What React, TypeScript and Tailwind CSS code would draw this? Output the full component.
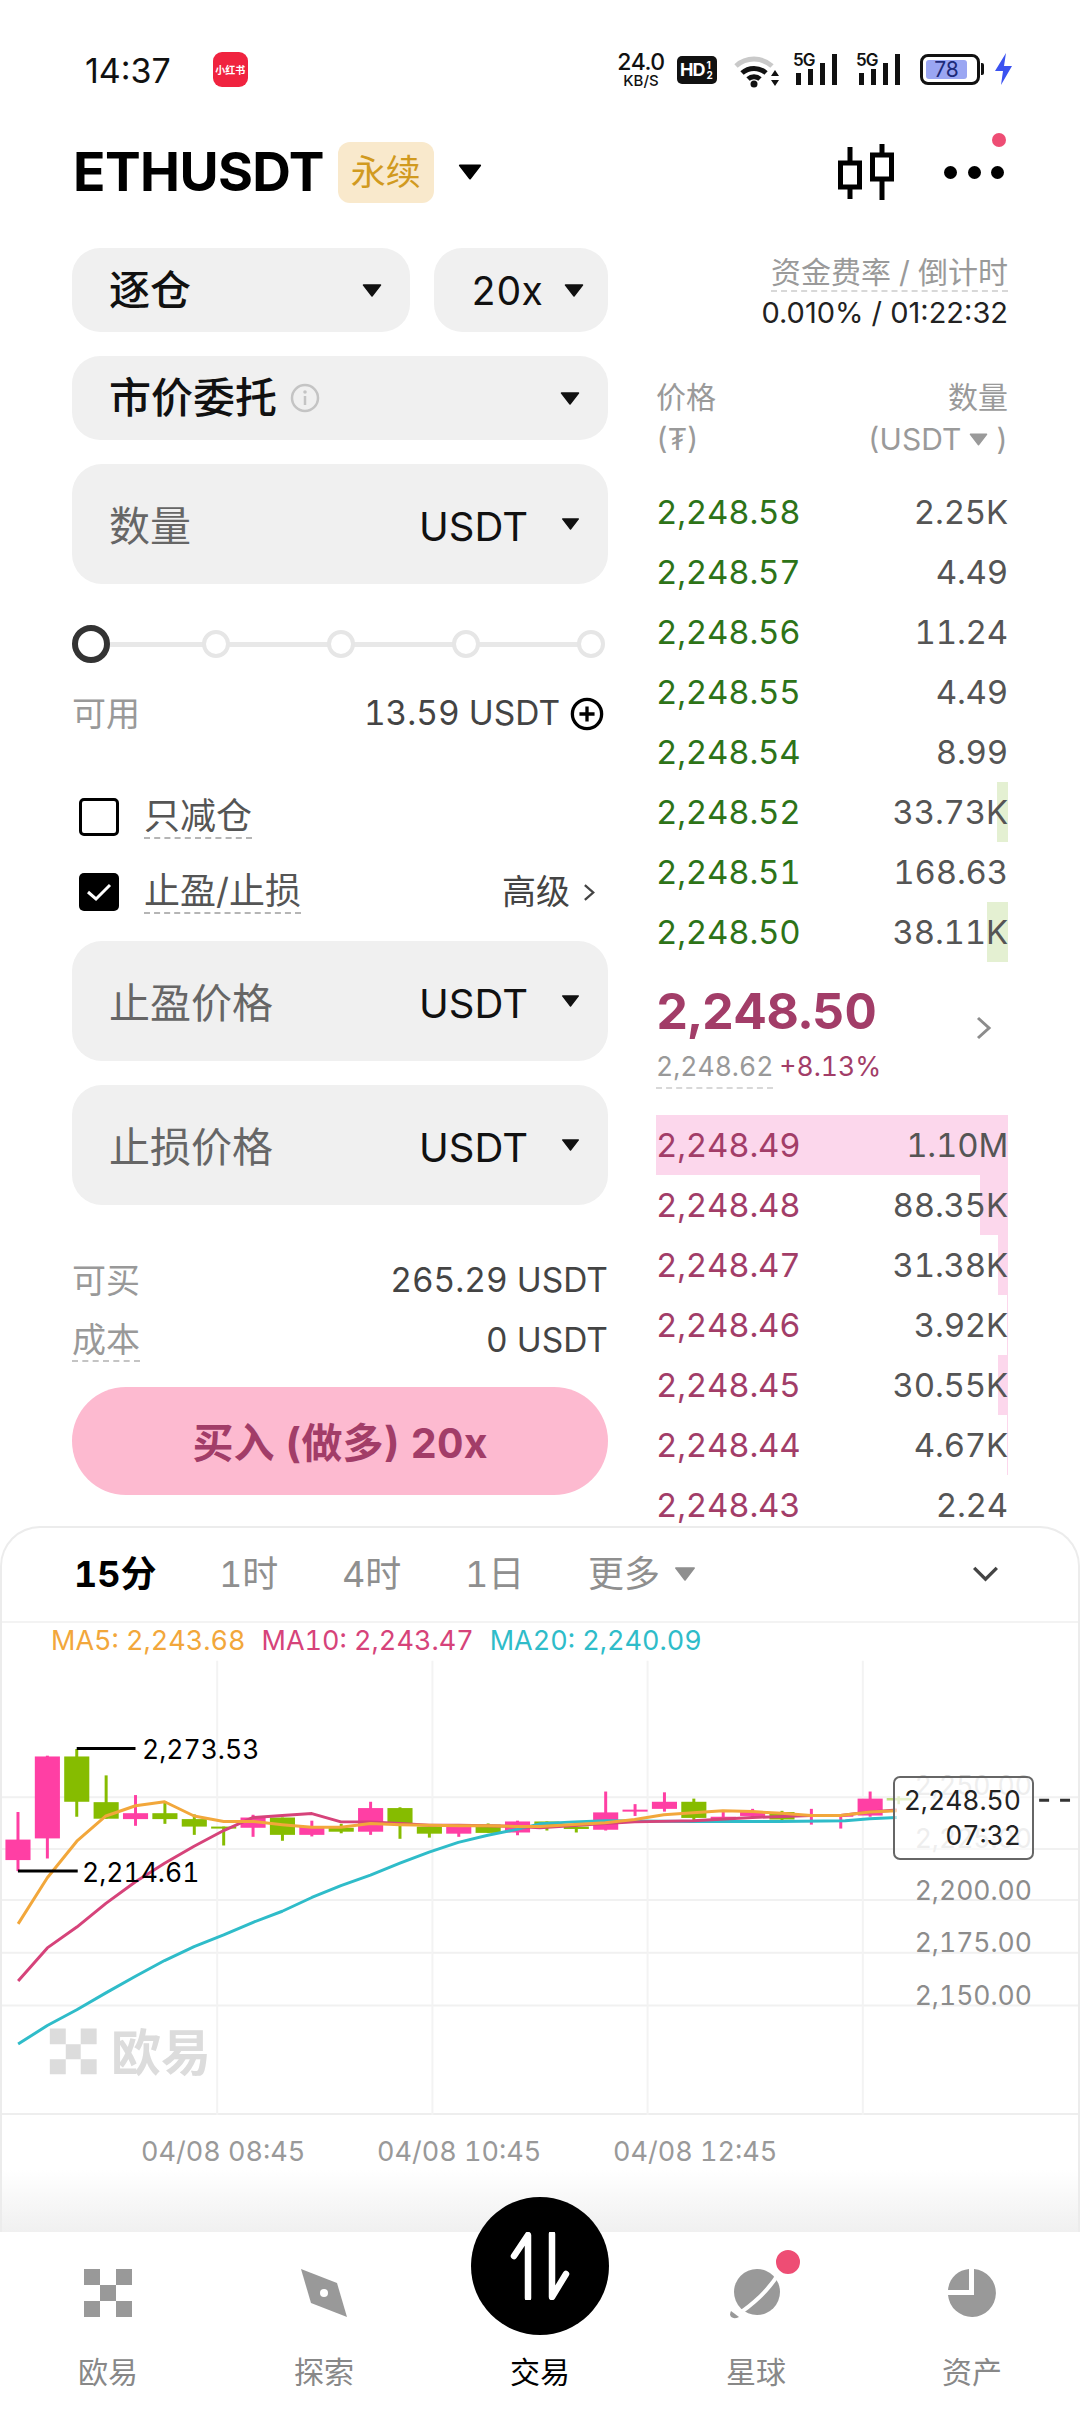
import type { ReactNode } from 'react';

const PINK = '#ff3fa4';
const GREEN = '#86bc00';

const bids = [
  ['2,248.58', '2.25K', 0],
  ['2,248.57', '4.49', 0],
  ['2,248.56', '11.24', 0],
  ['2,248.55', '4.49', 0],
  ['2,248.54', '8.99', 0],
  ['2,248.52', '33.73K', 11],
  ['2,248.51', '168.63', 0],
  ['2,248.50', '38.11K', 21],
] as const;

const asks = [
  ['2,248.49', '1.10M', 352],
  ['2,248.48', '88.35K', 28],
  ['2,248.47', '31.38K', 10],
  ['2,248.46', '3.92K', 1],
  ['2,248.45', '30.55K', 10],
  ['2,248.44', '4.67K', 1],
  ['2,248.43', '2.24', 0],
] as const;

const yLabels = [
  ['2,250.00', 147, '#d4d4d4'],
  ['2,225.00', 200, '#d4d4d4'],
  ['2,200.00', 252, '#8c8c8c'],
  ['2,175.00', 304, '#8c8c8c'],
  ['2,150.00', 357, '#8c8c8c'],
] as const;

// candles: up?, body top, body bottom, wick top, wick bottom (measured on the 2.904 / 2.529 crops)
const candles: [boolean, number, number, number, number][] = [
  [true, 808, 860, 738, 888],
  [true, 597, 805, 595, 856],
  [false, 597, 712, 578, 750],
  [false, 713, 755, 645, 755],
  [true, 741, 756, 695, 773],
  [false, 741, 756, 710, 768],
  [false, 756, 775, 744, 796],
  [false, 775, 777, 775, 823],
  [true, 752, 778, 745, 801],
  [false, 752, 796, 752, 811],
  [true, 775, 796, 760, 800],
  [false, 778, 788, 768, 792],
  [true, 728, 788, 712, 796],
  [false, 728, 770, 726, 806],
  [false, 775, 793, 775, 803],
  [true, 772, 793, 770, 801],
  [false, 770, 791, 767, 791],
  [true, 762, 790, 760, 797],
  [false, 762, 775, 762, 785],
  [false, 775, 781, 775, 790],
  [true, 739, 783, 686, 785],
  [true, 732, 736, 718, 748],
  [true, 712, 730, 688, 737],
  [false, 712, 753, 704, 760],
  [true, 750, 757, 738, 757],
  [true, 738, 748, 730, 750],
  [false, 738, 757, 735, 760],
  [true, 745, 750, 730, 770],
  [true, 745, 750, 745, 780],
  [true, 704, 747, 686, 750],
];

const ma5 = [[47,1022],[132,905],[218,812],[303,748],[389,722],[474,712],[560,748],[646,762],[732,762],[817,770],[903,777],[988,777],[1074,767],[1160,770],[1245,772],[1330,773],[1416,773],[1501,775],[1568,775],[1758,765],[1844,757],[1929,745],[2015,740],[2101,735],[2187,737],[2273,741],[2358,747],[2444,747],[2529,738],[2608,735]];
const ma10 = [[47,1167],[132,1083],[218,1030],[303,970],[389,915],[474,868],[560,825],[646,785],[732,752],[817,747],[903,742],[988,763],[1074,763],[1160,767],[1245,772],[1330,772],[1416,773],[1501,775],[1568,778],[1758,767],[1844,763],[2015,760],[2187,752],[2358,747],[2444,747],[2529,738],[2608,733]];
const ma20 = [[47,1327],[132,1280],[218,1240],[303,1197],[389,1155],[474,1115],[560,1080],[646,1050],[732,1018],[817,990],[903,955],[988,925],[1074,898],[1160,868],[1245,840],[1330,815],[1416,797],[1501,782],[1568,768],[1668,763],[1758,760],[2015,762],[2268,762],[2458,760],[2529,755],[2608,752]];

const X = (u: number) => u / 2.904;
const Y = (u: number) => u * 0.3954 - 100;
const toPoints = (pts: number[][]) => pts.map(([x, y]) => `${X(x).toFixed(1)},${Y(y).toFixed(1)}`).join(' ');

function Caret({ className = 'w-[20px] h-[13px]', fill = '#111' }: { className?: string; fill?: string }) {
  return (
    <svg viewBox="0 0 20 13" className={className}>
      <path d="M1.5 1h17L10 12z" fill={fill} stroke={fill} strokeWidth="1.5" strokeLinejoin="round" />
    </svg>
  );
}

function Signal() {
  return (
    <div className="relative w-[47px] h-[34px]">
      <span className="absolute left-0 top-[0px] text-[17px] font-semibold leading-none tracking-[-1px] text-[#111]">5G</span>
      <svg viewBox="0 0 47 34" className="absolute inset-0 w-full h-full">
        <rect x="3" y="21" width="5" height="12" fill="#111" />
        <rect x="15" y="17" width="5" height="16" fill="#111" />
        <rect x="27" y="11" width="5" height="22" fill="#111" />
        <rect x="39" y="2" width="5" height="31" fill="#111" />
      </svg>
    </div>
  );
}

function StatusBar() {
  return (
    <div className="h-[130px] pl-[85px] pr-[67px] pt-[52px] flex items-start normal-nums">
      <span className="text-[34px] leading-[38px] text-[#111]">14:37</span>
      <div className="ml-[42px] w-[35px] h-[35px] rounded-[9px] bg-[#f0233f] flex items-center justify-center">
        <span className="text-[10px] font-bold text-white whitespace-nowrap leading-none">小红书</span>
      </div>
      <div className="ml-auto flex items-start">
        <div className="w-[52px] flex flex-col items-center text-[#111]">
          <span className="text-[23px] font-medium leading-[21px] tracking-[-0.5px]">24.0</span>
          <span className="text-[15px] font-medium leading-[15px]">KB/S</span>
        </div>
        <div className="ml-[10px] mt-[4px] w-[40px] h-[28px] rounded-[5px] bg-[#111] flex items-center pl-[3px] overflow-hidden">
          <span className="text-[18px] font-bold text-white leading-none tracking-[-1px]">HD</span>
          <span className="text-[10px] font-bold text-white leading-[10px] ml-[2px] w-[6px]">1 2</span>
        </div>
        <svg viewBox="0 0 46 36" className="ml-[17px] w-[46px] h-[36px]">
          <path d="M2 14 A27 27 0 0 1 38 14" fill="none" stroke="#c9c9c9" strokeWidth="5" />
          <path d="M8 21 A18 18 0 0 1 32 21" fill="none" stroke="#111" strokeWidth="5" />
          <path d="M14 27 A9 9 0 0 1 26 27" fill="none" stroke="#111" strokeWidth="5" />
          <circle cx="20" cy="32" r="3.5" fill="#111" />
          <path d="M37 24h8l-4-6zM37 28h8l-4 6z" fill="#111" />
        </svg>
        <div className="ml-[13px]">
          <Signal />
        </div>
        <div className="ml-[16px]">
          <Signal />
        </div>
        <div className="ml-[17px] mt-[2px] w-[60px] h-[31px] rounded-[8px] border-[3px] border-[#111] p-[3px] relative">
          <div className="w-[41px] h-full rounded-[3px] bg-[#9aa6f2] flex items-center justify-center">
            <span className="text-[21px] leading-none text-[#1d2a7a]">78</span>
          </div>
          <div className="absolute right-[-7px] top-[6px] w-[3px] h-[12px] bg-[#111] rounded-r-[2px]" />
        </div>
        <svg viewBox="0 0 20 32" className="ml-[13px] mt-[1px] w-[20px] h-[32px]">
          <path d="M13 0 2 18h8l-2 14L19 13h-8z" fill="#3b52f0" />
        </svg>
      </div>
    </div>
  );
}

function Header() {
  return (
    <div className="h-[110px] pb-[26px] pl-[73px] pr-[76px] flex items-center">
      <span className="text-[53.5px] font-bold leading-none tracking-[-0.6px] text-black">ETHUSDT</span>
      <div className="ml-[14px] w-[96px] h-[61px] rounded-[12px] bg-[#f9e9cc] flex items-center justify-center">
        <span className="text-[35px] leading-none text-[#d19a1f]">永续</span>
      </div>
      <Caret className="ml-[24px] w-[24px] h-[16px]" fill="#000" />
      <svg viewBox="0 0 56 58" className="ml-auto w-[56px] h-[58px]">
        <path d="M12 4v52M44 1v56" stroke="#000" strokeWidth="5" />
        <rect x="2.5" y="20" width="19" height="24" fill="#fff" stroke="#000" strokeWidth="5" />
        <rect x="34.5" y="12" width="19" height="24" fill="#fff" stroke="#000" strokeWidth="5" />
      </svg>
      <div className="relative ml-[50px] w-[60px] flex justify-between">
        <span className="w-[13px] h-[13px] rounded-full bg-black" />
        <span className="w-[13px] h-[13px] rounded-full bg-black" />
        <span className="w-[13px] h-[13px] rounded-full bg-black" />
        <span className="absolute right-[-2px] top-[-33px] w-[14px] h-[14px] rounded-full bg-[#ee4d74]" />
      </div>
    </div>
  );
}

function Select({ children, className }: { children: ReactNode; className: string }) {
  return (
    <div className={`h-[84px] rounded-[28px] bg-[#f0f0f0] flex items-center ${className}`}>
      {children}
    </div>
  );
}

function InputBox({ label, className = '' }: { label: string; className?: string }) {
  return (
    <div className={`h-[120px] rounded-[30px] bg-[#f0f0f0] pl-[37px] pr-[28px] flex items-center ${className}`}>
      <span className="pt-[5px] text-[41px] leading-none text-[#666]">{label}</span>
      <span className="ml-auto pt-[5px] text-[40px] leading-none text-[#111]">USDT</span>
      <Caret className="ml-[33px] w-[19px] h-[12px]" />
    </div>
  );
}

function OrderForm() {
  return (
    <div className="w-[536px] shrink-0 flex flex-col">
      <div className="flex gap-[24px]">
        <Select className="w-[338px] pl-[37px] pr-[28px] justify-between">
          <span className="text-[41px] font-medium leading-none text-[#111]">逐仓</span>
          <Caret />
        </Select>
        <Select className="w-[174px] pl-[37px] pr-[24px] justify-between">
          <span className="text-[39px] leading-none text-[#111]">20x</span>
          <Caret />
        </Select>
      </div>
      <Select className="mt-[24px] pl-[37px] pr-[28px]">
        <span className="text-[42px] font-medium leading-none text-[#111]">市价委托</span>
        <svg viewBox="0 0 30 30" className="ml-[13px] w-[30px] h-[30px]">
          <circle cx="15" cy="15" r="13" fill="none" stroke="#c4c4c4" strokeWidth="2.5" />
          <path d="M15 13v9" stroke="#c4c4c4" strokeWidth="2.5" />
          <circle cx="15" cy="9" r="1.8" fill="#c4c4c4" />
        </svg>
        <Caret className="ml-auto w-[20px] h-[13px]" />
      </Select>
      <InputBox label="数量" className="mt-[24px]" />

      <div className="relative mt-[41px] h-[38px] flex items-center">
        <div className="absolute left-0 right-[8px] top-[17px] h-[5px] bg-[#e8e8e8]" />
        <span className="relative w-[38px] h-[38px] rounded-full bg-white border-[6px] border-[#333]" />
        {[0, 1, 2, 3].map((i) => (
          <span
            key={i}
            className={`relative w-[28px] h-[28px] rounded-full bg-white border-[4px] border-[#e6e6e6] ${i === 0 ? 'ml-[92px]' : 'ml-[97px]'}`}
          />
        ))}
      </div>

      <div className="mt-[33px] h-[36px] flex items-center">
        <span className="text-[34px] leading-none text-[#999]">可用</span>
        <span className="ml-auto text-[33.5px] leading-none text-[#444]">13.59 USDT</span>
        <svg viewBox="0 0 36 36" className="ml-[10px] mr-[4px] w-[34px] h-[34px]">
          <circle cx="18" cy="18" r="15.5" fill="none" stroke="#000" strokeWidth="3.5" />
          <path d="M10 18h16M18 10v16" stroke="#000" strokeWidth="3.5" />
        </svg>
      </div>

      <div className="mt-[62px] pl-[7px] h-[46px] flex items-center">
        <div className="w-[40px] h-[38px] rounded-[5px] border-[3px] border-black" />
        <span className="ml-[25px] text-[36px] leading-[42px] text-[#555] border-b-2 border-dashed border-[#b5b5b5]">只减仓</span>
      </div>
      <div className="mt-[29px] pl-[7px] h-[46px] flex items-center">
        <div className="w-[40px] h-[38px] rounded-[5px] bg-black flex items-center justify-center">
          <svg viewBox="0 0 28 20" className="w-[28px] h-[20px]">
            <path d="M3 10l8 7L25 3" fill="none" stroke="#fff" strokeWidth="3" />
          </svg>
        </div>
        <span className="ml-[25px] text-[36px] leading-[42px] text-[#555] border-b-2 border-dashed border-[#b5b5b5]">止盈/止损</span>
        <span className="ml-auto text-[34px] leading-none text-[#444]">高级</span>
        <svg viewBox="0 0 14 20" className="ml-[13px] mr-[12px] w-[13px] h-[19px]">
          <path d="M2 2l9 8-9 8" fill="none" stroke="#444" strokeWidth="2.5" />
        </svg>
      </div>

      <InputBox label="止盈价格" className="mt-[26px]" />
      <InputBox label="止损价格" className="mt-[24px]" />

      <div className="mt-[57px] h-[38px] flex items-center justify-between">
        <span className="text-[34px] leading-none text-[#999]">可买</span>
        <span className="text-[33.5px] leading-none text-[#444]">265.29 USDT</span>
      </div>
      <div className="mt-[20px] h-[40px] flex items-start justify-between">
        <span className="text-[34px] leading-[40px] text-[#999] border-b-2 border-dashed border-[#c4c4c4]">成本</span>
        <span className="text-[33.5px] leading-[40px] text-[#444]">0 USDT</span>
      </div>
      <div className="mt-[27px] h-[108px] pt-[4px] rounded-full bg-[#fdbad0] flex items-center justify-center">
        <span className="text-[41px] font-bold leading-none text-[#a23d68]">买入 (做多) 20x</span>
      </div>
    </div>
  );
}

function BookRow({ price, qty, bar, priceColor, barColor }: { price: string; qty: string; bar: number; priceColor: string; barColor: string }) {
  return (
    <div className="relative h-[60px] flex items-center justify-between text-[33px] leading-none tracking-[-0.2px]">
      {bar > 0 && <div className={`absolute right-0 top-0 bottom-0 ${barColor}`} style={{ width: bar }} />}
      <span className={`relative ${priceColor}`}>{price}</span>
      <span className="relative text-[#555]">{qty}</span>
    </div>
  );
}

function OrderBook() {
  return (
    <div className="w-[352px] ml-[48px] flex flex-col">
      <div className="self-end text-[30px] leading-[36px] text-[#9a9a9a] border-b-2 border-dashed border-[#d8d8d8] mt-[6px]">资金费率 / 倒计时</div>
      <div className="self-end mt-[3px] text-[29px] leading-[36px] text-[#222] normal-nums">0.010% / 01:22:32</div>

      <div className="mt-[45px] flex justify-between text-[30px] text-[#9a9a9a] leading-[42px]">
        <div className="flex flex-col">
          <span>价格</span>
          <span>(₮)</span>
        </div>
        <div className="flex flex-col items-end">
          <span>数量</span>
          <span className="flex items-center">
            (USDT
            <Caret className="ml-[8px] mr-[8px] w-[19px] h-[13px]" fill="#9a9a9a" />)
          </span>
        </div>
      </div>

      <div className="mt-[22px] shrink-0">
        {bids.map(([price, qty, bar]) => (
          <BookRow key={price} price={price} qty={qty} bar={bar} priceColor="text-[#2d7318]" barColor="bg-[#e4f0d2]" />
        ))}
      </div>

      <div className="h-[153px] shrink-0 relative">
        <div className="pt-[24px] text-[50px] font-bold leading-none text-[#a23d68]">2,248.50</div>
        <div className="mt-[17px] flex items-start text-[26.5px] leading-none">
          <span className="text-[#999] pb-[7px] border-b-2 border-dashed border-[#d8d8d8]">2,248.62</span>
          <span className="ml-[6px] text-[#a23d68]">+8.13%</span>
        </div>
        <svg viewBox="0 0 16 24" className="absolute right-[16px] top-[54px] w-[16px] h-[24px]">
          <path d="M2 2l11 10L2 22" fill="none" stroke="#8c8c8c" strokeWidth="3" />
        </svg>
      </div>

      <div className="shrink-0">
        {asks.map(([price, qty, bar]) => (
          <BookRow key={price} price={price} qty={qty} bar={bar} priceColor="text-[#a23d68]" barColor="bg-[#fcd7ec]" />
        ))}
      </div>
    </div>
  );
}

function Chart() {
  return (
    <div className="relative h-[496px]">
      <svg viewBox="0 0 1080 496" className="absolute inset-0 w-full h-full">
        {[177, 229, 280, 333, 386].map((y) => (
          <line key={y} x1="0" x2="1080" y1={y} y2={y} stroke="#f1f1f1" strokeWidth="2" />
        ))}
        <line x1="0" x2="1080" y1="1" y2="1" stroke="#f3f3f3" strokeWidth="2" />
        <line x1="0" x2="1080" y1="495" y2="495" stroke="#eeeeee" strokeWidth="2" />
        {[216, 432, 648, 864].map((x) => (
          <line key={x} x1={x} x2={x} y1="40" y2="496" stroke="#f3f3f3" strokeWidth="2" />
        ))}
        {candles.map(([up, top, bot, wickTop, wickBot], i) => {
          const cx = X(46.6 + 85.65 * i);
          const color = up ? PINK : GREEN;
          return (
            <g key={i}>
              <line x1={cx} x2={cx} y1={Y(wickTop)} y2={Y(wickBot)} stroke={color} strokeWidth="3" />
              <rect x={cx - 12.6} y={Y(top)} width="25.2" height={Math.max(Y(bot) - Y(top), 2)} fill={color} />
            </g>
          );
        })}
        <path d="M888 179h25M900 176v8" stroke={GREEN} strokeWidth="2.5" opacity="0.5" />
        <polyline points={toPoints(ma20)} fill="none" stroke="#2fbcc9" strokeWidth="3" strokeLinejoin="round" />
        <polyline points={toPoints(ma10)} fill="none" stroke="#d6437a" strokeWidth="3" strokeLinejoin="round" />
        <polyline points={toPoints(ma5)} fill="none" stroke="#f2a73b" strokeWidth="3" strokeLinejoin="round" />
        <path d="M75 128h59M16 251h60" stroke="#000" strokeWidth="3" />
        <path d="M1041 180h10M1062 180h10" stroke="#333" strokeWidth="3" />
        {/* okx mark in the watermark */}
        <path d="M48 409h16v16H48zM79 409h16v16H79zM64 425h15v15H64zM48 440h16v15H48zM79 440h16v15H79z" fill="#dcdcdc" />
      </svg>

      <div className="absolute left-[49px] top-[1px] flex gap-[16px] text-[27px] leading-[40px] whitespace-nowrap">
        <span className="text-[#f2a73b]">MA5: 2,243.68</span>
        <span className="text-[#d6437a]">MA10: 2,243.47</span>
        <span className="text-[#2fbcc9]">MA20: 2,240.09</span>
      </div>

      <span className="absolute left-[140px] top-[111px] text-[26.5px] leading-[36px] text-black">2,273.53</span>
      <span className="absolute left-[80px] top-[234px] text-[26.5px] leading-[36px] text-black">2,214.61</span>
      <span className="absolute left-[109px] top-[408px] text-[50px] font-bold leading-[50px] text-[#dcdcdc]">欧易</span>

      {yLabels.map(([text, top, color]) => (
        <span key={text} className="absolute right-[46px] text-[26.5px] leading-[36px]" style={{ top, color }}>
          {text}
        </span>
      ))}

      <div className="absolute left-[891px] top-[156px] w-[141px] h-[84px] rounded-[7px] border-2 border-[#666] bg-white/60 flex flex-col items-end justify-center pr-[11px] text-[26.5px] leading-[35px] text-[#222]">
        <span>2,248.50</span>
        <span>07:32</span>
      </div>
    </div>
  );
}

function ChartPanel() {
  return (
    <div className="h-[706px] rounded-t-[40px] border-t-2 border-x-2 border-[#ececec] bg-white flex flex-col relative z-10">
      <div className="h-[92px] pl-[72px] pr-[79px] flex items-center text-[36px] leading-none text-[#8f8f8f]">
        <span className="font-bold text-black w-[145px]">15分</span>
        <span className="w-[123px]">1时</span>
        <span className="w-[123px]">4时</span>
        <span className="w-[123px]">1日</span>
        <span>更多</span>
        <Caret className="ml-[14px] w-[22px] h-[14px]" fill="#8f8f8f" />
        <svg viewBox="0 0 28 18" className="ml-auto w-[27px] h-[17px]">
          <path d="M2 2l12 12L26 2" fill="none" stroke="#444" strokeWidth="3.5" />
        </svg>
      </div>
      <Chart />
      <div className="h-[54px] relative text-[27px] leading-none text-[#999]">
        <div className="pl-[139px] pt-[22px] flex">
          <span className="w-[236px]">04/08 08:45</span>
          <span className="w-[236px]">04/08 10:45</span>
          <span className="w-[236px]">04/08 12:45</span>
        </div>
      </div>
      <div className="flex-1 bg-gradient-to-b from-white to-[#f0f0f0]" />
    </div>
  );
}

function NavItem({ label, active, children }: { label: string; active?: boolean; children?: ReactNode }) {
  return (
    <div className="flex flex-col items-center">
      <div className="mt-[35px] h-[52px] w-[52px] flex items-center justify-center relative">{children}</div>
      <span className={`mt-[38px] text-[30px] leading-none ${active ? 'text-black' : 'text-[#888]'}`}>{label}</span>
    </div>
  );
}

function BottomNav() {
  return (
    <div className="relative z-20 flex-1 bg-white grid grid-cols-5">
      <NavItem label="欧易">
        <svg viewBox="0 0 48 48" className="w-[48px] h-[48px]">
          <path d="M0 0h16v16H0zM32 0h16v16H32zM16 16h16v16H16zM0 32h16v16H0zM32 32h16v16H32z" fill="#999" />
        </svg>
      </NavItem>
      <NavItem label="探索">
        <svg viewBox="0 0 48 48" className="w-[48px] h-[48px]">
          <path d="M1 0l36 14 10 34-36-14z" fill="#999" />
          <circle cx="24" cy="24" r="4" fill="#fff" />
        </svg>
      </NavItem>
      <NavItem label="交易" active />
      <NavItem label="星球">
        <svg viewBox="0 0 52 52" className="w-[52px] h-[52px]">
          <circle cx="27" cy="25" r="23" fill="#999" />
          <path d="M2 50C12 46 36 28 49 6" fill="none" stroke="#fff" strokeWidth="4" />
          <path d="M1 44c-3 6 2 9 8 6z" fill="#999" />
        </svg>
        <span className="absolute right-[-21px] top-[-20px] w-[30px] h-[30px] rounded-full bg-[#ee4d74] border-[3px] border-white" />
      </NavItem>
      <NavItem label="资产">
        <svg viewBox="0 0 48 48" className="w-[48px] h-[48px]">
          <path d="M21 0v21H0C1 9 10 1 21 0z" fill="#999" />
          <path d="M26 0a24 24 0 1 1-26 26h26z" fill="#999" />
        </svg>
      </NavItem>
      <div className="absolute left-[471px] top-[-35px] w-[138px] h-[138px] rounded-full bg-black flex items-center justify-center">
        <svg viewBox="0 0 62 68" className="w-[62px] h-[68px]">
          <path d="M5 24 19 3v63M43 2v63L57 42" fill="none" stroke="#fff" strokeWidth="6.5" strokeLinecap="round" strokeLinejoin="round" />
        </svg>
      </div>
    </div>
  );
}

export default function App() {
  return (
    <div className="w-[1080px] h-[2412px] overflow-hidden bg-white flex flex-col tabular-nums font-['Inter','Noto_Sans_CJK_SC',sans-serif]">
      <StatusBar />
      <Header />
      <div className="h-[1286px] shrink-0 overflow-hidden pl-[72px] pr-[72px] pt-[8px] flex">
        <OrderForm />
        <OrderBook />
      </div>
      <ChartPanel />
      <BottomNav />
    </div>
  );
}
